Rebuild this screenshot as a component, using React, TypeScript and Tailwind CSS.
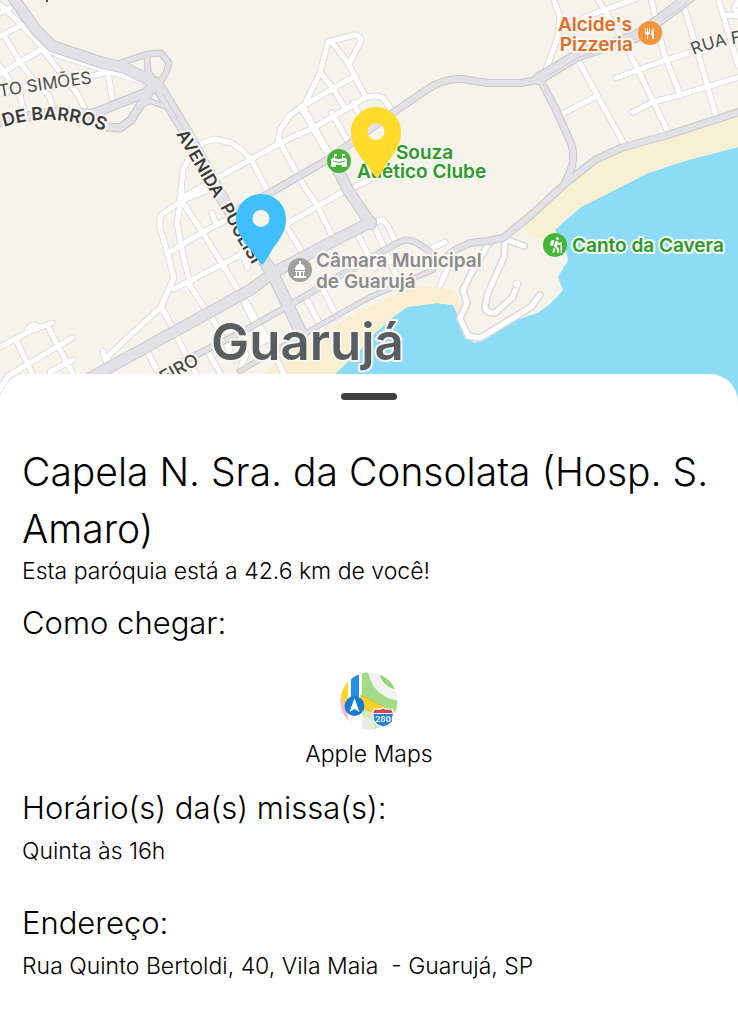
import { FaHiking } from "react-icons/fa";

const minorRoads = [
  "M-2 3L22 25L42 47L60 56L108 71L147 83",
  "M-2 37L22 25M-2 14L10 8M0 74L42 49",
  "M5 37L20 62L33 80L50 97L52 106M-2 64L20 95L23 108",
  "M42 49L65 78L77 93L84 107M0 93L30 86L92 76L108 72L112 98",
  "M180 200L183 170L192 152L205 142L215 139L232 143L243 151L252 161L268 192",
  "M180 199L280 143L315 127L365 98Q375 94 383 98L390 108",
  "M278 142L280 130L290 115L303 106L353 77",
  "M305 104L320 73L328 42L354 35Q363 36 360 43L350 62",
  "M331 41L348 63L365 96M320 72L332 87L345 108M353 103L360 116M332 113L350 145",
  "M280 143L305 188L317 205L332 236M287 227L303 254M288 223L343 192L378 176",
  "M182 190L180 205L177 222L183 255L190 283M182 192L180 200",
  "M208 190L181 201L160 216L160 228L168 255L174 278L161 306L175 333L197 376",
  "M181 200L203 233L240 293L263 342M170 252L203 232L232 217",
  "M174 289L250 250M163 305L107 357L108 367M103 351L108 367",
  "M188 283L213 320L235 360M212 213L216 224M242 252L248 268",
  "M0 347L30 331L52 323M-2 392L8 376L72 338M17 342L33 375M47 325L74 376M50 372L73 360",
  "M28 329Q33 321 39 328M148 353L158 372M208 352L222 376",
  "M357 233L375 268M373 223L397 277M375 222L383 220L388 226L396 244",
  "M307 300L322 328M323 290L337 317M430 249L445 242M440 285L453 257",
  "M240 370L246 354M275 355L284 374M245 300L268 340",
  "M553 -2L560 17L558 37L545 72M578 60L625 146",
  "M597 -2L620 35L638 70L668 132M651 -2L663 50L680 95",
  "M685 10L705 77L716 117M718 -2L738 65",
  "M616 78L660 62L692 52M633 112L653 102L680 95L740 77",
  "M560 115L595 97M585 17L638 -2M724 15L740 16M738 2L734 8L740 16",
];

const capeRoads = [
  "M489 243L473 270L463 290L467 303L460 318L468 336L480 338L531 307L540 295",
  "M505 241L504 257L488 293L485 306Q485 313 495 313L513 297L517 285",
  "M508 240L524 246",
];

const majorRoads = [
  { d: "M12 -4L36 30L52 46L103 63L125 68L155 83", w: 10 },
  { d: "M115 65L147 54L161 53L169 63L166 73L154 90M147 55L148 72L156 83", w: 5 },
  { d: "M-2 122L25 117L60 111L92 114L145 93L156 83", w: 8 },
  { d: "M92 118L107 127L120 128L131 120L141 104L156 83", w: 7 },
  { d: "M141 106L150 101L163 106", w: 4 },
  { d: "M156 83L185 130L225 203L273 274L302 335", w: 11 },
  { d: "M235 211L268 194L327 160L397 110L425 91Q442 78 462 79L488 83L521 83L541 79", w: 6 },
  { d: "M538 79L578 55L635 37L658 21L690 -3", w: 10 },
  { d: "M541 81L555 108L571 143Q576 158 570 172L565 183", w: 6 },
  { d: "M742 111L668 135L621 148L595 160L566 183L530 216L503 238L488 241L470 243L455 250L440 262", w: 6 },
  { d: "M430 252Q414 239 405 240L397 243L320 287L290 305L240 333L160 373", w: 5 },
  { d: "M433 270L370 297L320 325L240 371", w: 4 },
  { d: "M90 378L250 290L273 273L320 248L371 222", w: 10 },
  { d: "M333 160L348 190L371 224", w: 10 },
];

function Pin({ x, y, color }: { x: number; y: number; color: string }) {
  return (
    <path
      transform={`translate(${x} ${y})`}
      fill={color}
      fillRule="evenodd"
      d="M0 -25C-14 -25 -25 -14 -25 0C-25 11 -20 19 -13 28C-8 34 -4 40 -1 44Q1 47 3 44C6 40 9 34 13 28C20 19 25 11 25 0C25 -14 14 -25 0 -25ZM0 -9A8.500 8.500 0 1 1 0 8A8.500 8.500 0 1 1 0 -9Z"
    />
  );
}

function CityMap() {
  return (
    <svg
      viewBox="0 0 738 404"
      preserveAspectRatio="xMidYMin slice"
      role="img"
      aria-label="Mapa de Guarujá"
      className="block h-[404px] w-full bg-[#8cdcf7] font-['Inter',sans-serif]"
    >
      <defs>
        <path id="simoes" d="M0 97Q45 89 110 81" />
        <path id="barros" d="M4 127Q58 109 116 136" />
        <path id="avenida" d="M176 134L220 208" />
        <path id="puglisi" d="M220 207L238 241L268 290" />
        <path id="rua" d="M694 55Q712 46 760 40" />
        <path id="ribeiro" d="M164 384L214 356" />
      </defs>
      <path fill="#f6f3eb" d="M0 0H738V147L688 160L648 173L595 200L581 207L555 230L566 250L568 260L558 277L563 290L551 303L538 313L525 317L508 323L490 337L475 343L466 338L460 320L453 305L437 303L407 307L393 317L375 333L360 350L335 374L310 404H0Z" />
      <path fill="#f8f0d2" d="M738 115L668 138L621 151L595 163L566 186L524 224L527 235L557 243L555 230Q566 214 581 207L595 200L648 173L688 160L738 147Z" />
      <path fill="#f9efd0" d="M454 290Q420 283 403 291L350 316L300 345L262 374L240 404H310L335 374L360 350L375 333L393 317L407 307L437 303L453 305L461 315Q461 297 454 290Z" />

      <g fill="none" strokeLinecap="round" strokeLinejoin="round">
        <g stroke="#dcdce0" strokeWidth="7">
          {minorRoads.map((d) => <path key={d} d={d} />)}
          <path strokeWidth="9" d="M302 107L333 162" />
        </g>
        <g stroke="#d9d9dc" strokeWidth="8">
          {capeRoads.map((d) => <path key={d} d={d} />)}
        </g>
        <g stroke="#fff" strokeWidth="5">
          {minorRoads.map((d) => <path key={d} d={d} />)}
          {capeRoads.map((d) => <path key={d} d={d} />)}
          <path strokeWidth="7" d="M302 107L333 162" />
        </g>
        <circle cx="517" cy="284" r="4" fill="#fff" stroke="#d9d9dc" />
        {majorRoads.map(({ d, w }) => <path key={d} d={d} stroke="#c6c6cc" strokeWidth={w + 2} />)}
        {majorRoads.map(({ d, w }) => <path key={d} d={d} stroke="#e1e1e6" strokeWidth={w} />)}
        <path stroke="#cbcbd1" d="M163 94L185 132M545 77L580 57L636 39M662 21L686 4" />
      </g>

      <g stroke="#f8f6f0" strokeWidth="4" strokeLinejoin="round" paintOrder="stroke" fill="#4c4c4c">
        <text fontSize="17"><textPath href="#simoes">TO SIMÕES</textPath></text>
        <text fontSize="18" fontWeight="600" fill="#3b3b3c"><textPath href="#barros">DE BARROS</textPath></text>
        <g fontSize="17" fontWeight="600" fill="#3b3b3c">
          <text><textPath href="#avenida">AVENIDA</textPath></text>
          <text><textPath href="#puglisi">PUGLISI</textPath></text>
        </g>
        <text fontSize="17"><textPath href="#rua">RUA FR</textPath></text>
        <text fontSize="18" fontWeight="500"><textPath href="#ribeiro">EIRO</textPath></text>
        <path stroke="none" d="M46 0h2v2h-2z" />

        <g fontSize="19" fontWeight="600">
          <g fill="#dc6f2a" textAnchor="end">
            <text x="632" y="31">Alcide&apos;s</text>
            <text x="633" y="51">Pizzeria</text>
          </g>
          <g fill="#2b9b2b">
            <text x="396" y="159">Souza</text>
            <text x="357" y="178">Atlético Clube</text>
            <text x="572" y="252">Canto da Cavera</text>
          </g>
          <g fill="#8b8b8d">
            <text x="316" y="267">Câmara Municipal</text>
            <text x="316" y="288">de Guarujá</text>
          </g>
        </g>
        <text x="211" y="360" fontSize="51" fontWeight="600" fill="#585d60">Guarujá</text>
      </g>

      <circle cx="650" cy="33" r="12" fill="#f7943a" />
      <g fill="#fff">
        <path d="M645 28h1v4h1v-4h1v4h1v-4h1v5q0 1-2 2v4h-1v-4q-2-1-2-2z" />
        <path d="M654 28q-3 2-3 7h1v4h2z" />
      </g>
      <circle cx="339" cy="161" r="12" fill="#48b539" />
      <g fill="#fff">
        <path d="M334 154h3v2h-2v3h-1zM342 154h3v2h-2v3h-1z" />
        <path d="M331 160Q331 158 334 158Q339 160 344 158Q347 158 347 160V165Q347 167 344 167H342V165H336V167H334Q331 167 331 165Z" />
        <path d="M333 161Q339 164 345 161" fill="none" stroke="#48b539" />
      </g>
      <circle cx="555" cy="245" r="12" fill="#42b834" />
      <FaHiking x={548} y={237} width={14} height={16} color="#fff" />
      <circle cx="300" cy="270" r="12" fill="#a09f9f" />
      <g fill="#fff">
        <path d="M299 261h2v3q4 1 4 6h-10q0-5 4-6zM295 271h10v1h-10zM294 276h12v2h-12z" />
        <path d="M296 272h1v4h-1zM299 272h2v4h-2zM303 272h1v4h-1z" />
      </g>
      <Pin x={261} y={219} color="#40bffc" />
      <Pin x={376} y={132} color="#ffdb2b" />
    </svg>
  );
}

function AppleMapsIcon() {
  return (
    <svg viewBox="0 0 58 58" aria-hidden="true" className="size-[58px]">
      <defs>
        <clipPath id="disc"><circle cx="29" cy="29" r="28.500" /></clipPath>
      </defs>
      <g clipPath="url(#disc)">
        <path fill="#f4f3ef" d="M0 0H58V58H0Z" />
        <path fill="#ffd52e" d="M0 8H8V38L0 32Z" />
        <path fill="#f7b6c6" d="M0 25Q8 33 9 58H0Z" />
        <path fill="#a3dc86" d="M21 0H28C31 16 42 26 58 29V48L22 25Z" />
        <path fill="#92d675" d="M39 0H58V18Q42 15 39 0Z" />
        <path fill="#a8df8d" d="M43 0H58V13Q46 11 43 0Z" />
        <path fill="#cfeab5" d="M21 36L39 45V58H21Z" />
        <path fill="#e9ecdf" d="M21 42L34 49V58H21Z" />
        <path fill="#fff" d="M8 0H11V58H8ZM19 0H22V58H12V38H19Z" />
        <path fill="#ffd12a" stroke="#f5b520" d="M21 23L58 43V51L43 46L21 35Z" />
        <path fill="#2390e6" d="M11 0H19V31H11Z" />
      </g>
      <circle cx="14.500" cy="34" r="10" fill="#147bd1" />
      <path fill="#fff" d="M14.500 26L19.500 40L14.500 37L9.500 40Z" />
      <path fill="#fff" d="M34 36Q38 38 43 35Q48 38 52 36L55 41Q53 46 53 49Q50 54 43 56Q35 53 33 48Q34 45 31 41Z" />
      <path fill="#d74145" d="M35 37.500Q39 39 43 36.500Q47 39 51 37.500L53 41H33Z" />
      <path fill="#2580db" d="M33 42H53Q51 46 52 49Q49 53 43 54.500Q37 53 34 48Q35 45 33 42Z" />
      <text x="43" y="50" textAnchor="middle" fontSize="8" fontWeight="600" fill="#fff" className="font-['Inter',sans-serif]">280</text>
    </svg>
  );
}

export default function App() {
  return (
    <main className="min-h-screen bg-white font-['Inter',sans-serif] text-black">
      <CityMap />
      <section className="relative -mt-[30px] rounded-t-[28px] bg-white px-[22px] pb-10">
        <div className="flex h-[69px] justify-center pt-[19px]">
          <button type="button" aria-label="Recolher painel" className="h-[7px] w-14 rounded-full bg-[#404041]" />
        </div>
        <h1 className="text-[39px] leading-[57px] font-light">Capela N. Sra. da Consolata (Hosp. S. Amaro)</h1>
        <p className="text-[23px] leading-7 font-light">Esta paróquia está a 42.6 km de você!</p>
        <h2 className="mt-4 text-[31px] leading-11 font-light">Como chegar:</h2>
        <div className="mt-[27px] flex justify-center">
          <a href="#apple-maps" className="flex flex-col items-center gap-2.5">
            <AppleMapsIcon />
            <span className="text-[23px] leading-7 font-light">Apple Maps</span>
          </a>
        </div>
        <h2 className="mt-[18px] text-[31px] leading-11 font-light">Horário(s) da(s) missa(s):</h2>
        <p className="mt-[7px] text-[23px] leading-7 font-light">Quinta às 16h</p>
        <h2 className="mt-9 text-[31px] leading-11 font-light">Endereço:</h2>
        <p className="mt-[7px] whitespace-pre-wrap text-[23px] leading-7 font-light">Rua Quinto Bertoldi, 40, Vila Maia  - Guarujá, SP</p>
      </section>
    </main>
  );
}
